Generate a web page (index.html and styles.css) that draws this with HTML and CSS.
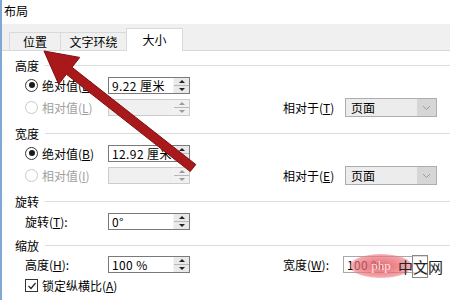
FILE: index.html
```html
<!DOCTYPE html>
<html lang="zh-CN">
<head>
    <meta charset="UTF-8">
    <title>布局</title>
    <link rel="stylesheet" href="styles.css">
</head>
<body>
<div class="window">
    <div class="title">布局</div>

    <div class="tabs">
        <div class="tab tab-pos">位置</div>
        <div class="tab tab-wrap">文字环绕</div>
        <div class="tab tab-size active">大小</div>
    </div>

    <div class="pane">

        <!-- 高度 -->
        <div class="group">
            <div class="group-title"><span>高度</span></div>
            <div class="row">
                <label class="opt"><span class="radio on"></span>绝对值(<u>E</u>)</label>
                <div class="spin"><span class="val">9.22 厘米</span><span class="arrows"><i class="up"></i><i class="down"></i></span></div>
            </div>
            <div class="row">
                <label class="opt off"><span class="radio"></span>相对值(<u>L</u>)</label>
                <div class="spin off"><span class="val"></span><span class="arrows"><i class="up"></i><i class="down"></i></span></div>
                <span></span>
                <label class="side">相对于(<u>T</u>)</label>
                <div class="select"><span class="val">页面</span><span class="drop"><svg width="9" height="6" viewBox="0 0 9 6"><polyline points="1,1 4.5,4.5 8,1" fill="none" stroke="#9a9a9a" stroke-width="1"/></svg></span></div>
            </div>
        </div>

        <!-- 宽度 -->
        <div class="group">
            <div class="group-title"><span>宽度</span></div>
            <div class="row">
                <label class="opt"><span class="radio on"></span>绝对值(<u>B</u>)</label>
                <div class="spin"><span class="val">12.92 厘米</span><span class="arrows"><i class="up"></i><i class="down"></i></span></div>
            </div>
            <div class="row">
                <label class="opt off"><span class="radio"></span>相对值(<u>I</u>)</label>
                <div class="spin off"><span class="val"></span><span class="arrows"><i class="up"></i><i class="down"></i></span></div>
                <span></span>
                <label class="side">相对于(<u>E</u>)</label>
                <div class="select"><span class="val">页面</span><span class="drop"><svg width="9" height="6" viewBox="0 0 9 6"><polyline points="1,1 4.5,4.5 8,1" fill="none" stroke="#9a9a9a" stroke-width="1"/></svg></span></div>
            </div>
        </div>

        <!-- 旋转 -->
        <div class="group rotate">
            <div class="group-title"><span>旋转</span></div>
            <div class="row">
                <label class="plain">旋转(<u>T</u>):</label>
                <div class="spin"><span class="val">0°</span><span class="arrows"><i class="up"></i><i class="down"></i></span></div>
            </div>
        </div>

        <!-- 缩放 -->
        <div class="group scale">
            <div class="group-title"><span>缩放</span></div>
            <div class="row">
                <label class="plain">高度(<u>H</u>):</label>
                <div class="spin"><span class="val">100 %</span><span class="arrows"><i class="up"></i><i class="down"></i></span></div>
                <span></span>
                <label class="side">宽度(<u>W</u>):</label>
                <div class="spin wide"><span class="val">100 %</span></div>
            </div>
            <div class="row">
                <label class="opt"><span class="check"><svg width="10" height="10" viewBox="0 0 10 10"><polyline points="1.5,5 4,7.5 8.5,2" fill="none" stroke="#222" stroke-width="1.2"/></svg></span>锁定纵横比(<u>A</u>)</label>
            </div>
            <div class="row">
                <label class="opt"><span class="check"></span>相对原始图片大小(<u>R</u>)</label>
            </div>
        </div>

    </div>

    <svg class="arrow" width="450" height="300" viewBox="0 0 450 300">
        <polygon points="44,51 79.7,57.4 72,67.3 195.8,164.5 190.2,171.5 66.4,74.3 58.7,84.2"
                 fill="#a9181b" stroke="#7e0f10" stroke-width="1" stroke-linejoin="round"/>
    </svg>

    <div class="watermark">
        <span class="blob">php</span><span class="site">中<b>文</b>网</span>
    </div>
</div>
</body>
</html>
```

FILE: styles.css
```css
body {
    margin: 0;
    padding: 0;
    font-family: "Noto Sans CJK SC", "Liberation Sans", sans-serif;
    font-size: 12px;
    color: #000;
    background-color: #fff;
    overflow: hidden;
}

.window {
    width: 448px;
    height: 300px;
    border-left: 2px solid #7fa8d2;
    position: relative;
    overflow: hidden;
}

u {
    text-decoration: underline;
    text-underline-offset: 1px;
}

.title {
    height: 24px;
    line-height: 22px;
    padding-left: 2px;
}

/* tab strip */
.tabs {
    height: 26px;
    background-color: #f0f0f0;
    border-bottom: 1px solid #d9d9d9;
    display: flex;
    align-items: flex-end;
    padding-left: 7px;
}

.tab {
    height: 17px;
    line-height: 17px;
    border: 1px solid #d9d9d9;
    border-bottom: none;
    text-align: center;
    margin-right: -1px;
}

.tab-pos {
    width: 50px;
}

.tab-wrap {
    width: 65px;
}

.tab-size {
    width: 55px;
}

.tab.active {
    height: 21px;
    line-height: 21px;
    margin-bottom: -1px;
    padding-bottom: 1px;
    background-color: #fff;
    position: relative;
}

/* content pane */
.pane {
    padding-top: 5px;
}

.group {
    margin-bottom: 6px;
}

.group.rotate {
    margin-bottom: 4px;
}

.group-title {
    height: 18px;
    display: flex;
    align-items: center;
    padding-left: 13px;
}

.group-title::after {
    content: "";
    flex: 1;
    height: 1px;
    background-color: #dcdcdc;
    margin-left: 6px;
}

.row {
    height: 22px;
    display: grid;
    grid-template-columns: 83px 82px 93px 62px 92px;
    align-items: center;
    padding-left: 23px;
}

.scale .row {
    height: 21px;
}

.opt,
.plain,
.side {
    display: flex;
    align-items: center;
    white-space: nowrap;
}

.off {
    color: #a0a0a0;
}

.radio {
    width: 11px;
    height: 11px;
    border: 1px solid #c9c9c9;
    border-radius: 50%;
    background-color: #fff;
    margin-right: 4px;
    position: relative;
    flex: none;
}

.radio.on {
    border-color: #333;
}

.radio.on::after {
    content: "";
    position: absolute;
    left: 2.5px;
    top: 2.5px;
    width: 6px;
    height: 6px;
    border-radius: 50%;
    background-color: #1a1a1a;
}

.check {
    width: 11px;
    height: 11px;
    border: 1px solid #333;
    background-color: #fff;
    margin-right: 4px;
    display: flex;
    align-items: center;
    justify-content: center;
    flex: none;
}

/* spin box */
.spin {
    height: 15px;
    border: 1px solid #7a7a7a;
    background-color: #fff;
    display: flex;
    align-items: center;
}

.spin.off {
    border-color: #cccccc;
    background-color: #f0f0f0;
}

.spin .val {
    flex: 1;
    padding-left: 3px;
    line-height: 15px;
    letter-spacing: 0.4px;
    white-space: nowrap;
    overflow: hidden;
}

.arrows {
    width: 15px;
    height: 15px;
    display: flex;
    flex-direction: column;
    background-color: #e9e9e9;
    border-left: 1px solid #f4f4f4;
}

.arrows i {
    flex: 1;
    display: flex;
    align-items: center;
    justify-content: center;
}

.arrows .up {
    border-bottom: 1px solid #b8b8b8;
}

.arrows .up::before {
    content: "";
    border-left: 3px solid transparent;
    border-right: 3px solid transparent;
    border-bottom: 3px solid #222;
}

.arrows .down::before {
    content: "";
    border-left: 3px solid transparent;
    border-right: 3px solid transparent;
    border-top: 3px solid #222;
}

.spin.off .arrows {
    background-color: #f0f0f0;
}

.spin.off .arrows i::before {
    border-top-color: #9a9a9a;
    border-bottom-color: #9a9a9a;
}

.spin.wide {
    width: 83px;
    margin-left: -2px;
    border-color: #a8a8a8;
}

/* dropdown */
.select {
    height: 17px;
    border: 1px solid #adadad;
    background-color: #ececec;
    display: flex;
    align-items: center;
    margin-top: 1px;
}

.select .val {
    flex: 1;
    padding-left: 5px;
    line-height: 17px;
}

.drop {
    width: 19px;
    height: 17px;
    background-color: #d6d6d6;
    display: flex;
    align-items: center;
    justify-content: center;
}

/* overlays */
.arrow {
    position: absolute;
    left: -2px;
    top: 0;
    pointer-events: none;
}

.watermark {
    position: absolute;
    left: 348px;
    top: 255px;
    display: flex;
    align-items: center;
    height: 22px;
}

.blob {
    width: 62px;
    height: 24px;
    border-radius: 50%;
    background: radial-gradient(ellipse at center, rgba(226, 80, 90, 0.85) 0%, rgba(236, 120, 128, 0.7) 60%, rgba(255, 255, 255, 0) 100%);
    color: rgba(255, 255, 255, 0.8);
    font-family: "Liberation Serif", serif;
    font-size: 13px;
    text-align: center;
    line-height: 24px;
}

.site {
    font-size: 15px;
    color: #222;
    margin-left: -14px;
    letter-spacing: -1px;
}

.site b {
    font-weight: normal;
    border: 1px solid #888;
    background-color: rgba(255, 255, 255, 0.6);
}
```
